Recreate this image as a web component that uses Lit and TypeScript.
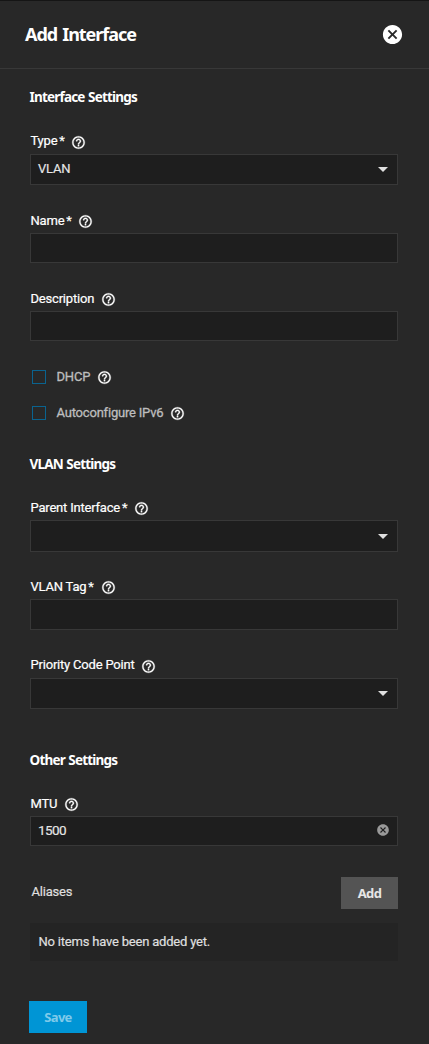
import { LitElement, html, css, svg, nothing } from "lit";
import { customElement, property } from "lit/decorators.js";

const HELP =
  "M11 18h2v-2h-2v2zm1-16C6.48 2 2 6.48 2 12s4.48 10 10 10 10-4.48 10-10S17.52 2 12 2zm0 18c-4.41 0-8-3.59-8-8s3.59-8 8-8 8 3.59 8 8-3.59 8-8 8zm0-14c-2.21 0-4 1.79-4 4h2c0-1.1.9-2 2-2s2 .9 2 2c0 2-3 1.75-3 5h2c0-2.25 3-2.5 3-5 0-2.21-1.79-4-4-4z";
const CLOSE_CIRCLE =
  "M12 2c5.53 0 10 4.47 10 10s-4.47 10-10 10S2 17.53 2 12 6.47 2 12 2m3.59 5L12 10.59 8.41 7 7 8.41 10.59 12 7 15.59 8.41 17 12 13.41 15.59 17 17 15.59 13.41 12 17 8.41 15.59 7z";

const icon = (d: string, cls: string) =>
  html`<svg class=${cls} viewBox="0 0 24 24" aria-hidden="true">${svg`<path d=${d} fill="currentColor"></path>`}</svg>`;

@customElement("form-field")
export class FormField extends LitElement {
  @property() label = "";
  @property() value = "";
  @property() kind: "text" | "select" | "clearable" = "text";
  @property({ type: Boolean }) required = false;

  static styles = css`
    :host { display: flex; flex-direction: column; }
    .label {
      height: 26px; display: flex; align-items: center; color: #fff;
      font-size: 13px; font-weight: 400; padding-left: 0.5px;
      -webkit-text-stroke: 0.2px currentColor;
    }
    :host(.raised) .label span { margin-top: -2px; }
    .star { margin-left: 1.9px; }
    .help { width: 15px; height: 15px; margin: 2px 0 0 6.8px; stroke: currentColor; stroke-width: 0.5px; }
    .box {
      flex: 1; box-sizing: border-box; display: flex; align-items: center; justify-content: space-between;
      background: #1e1e1e; border: 1px solid #383838; padding: 0 9px 0 7px;
      color: #e6e6e6; font-size: 13px;
    }
    .text { margin-top: -2px; -webkit-text-stroke: 0.15px currentColor; }
    .clearable { font-size: 13.5px; letter-spacing: -0.55px; }
    .caret { width: 10px; height: 5px; color: #e0e0e0; }
    .clear { width: 14px; height: 14px; margin: -2px -2px 0 0; color: #999; }
  `;

  render() {
    return html`
      <div class="label">
        <span>${this.label}</span>${this.required ? html`<span class="star">*</span>` : nothing}${icon(HELP, "help")}
      </div>
      <div class="box">
        <span class="text ${this.kind}">${this.value}</span>
        ${this.kind === "select"
          ? html`<svg class="caret" viewBox="0 0 10 5"><path d="M0 0h10L5 5z" fill="currentColor"></path></svg>`
          : this.kind === "clearable" ? icon(CLOSE_CIRCLE, "clear") : nothing}
      </div>
    `;
  }
}

@customElement("app-root")
export class AppRoot extends LitElement {
  static styles = css`
    :host {
      display: flex; flex-direction: column; box-sizing: border-box; height: 1044px;
      background: #282828; border-top: 1px solid #151515; color: #fff;
      font-family: Roboto, "Liberation Sans", sans-serif; font-size: 13px; letter-spacing: -0.2px;
    }
    header {
      height: 67px; flex: none; display: flex; align-items: center; justify-content: space-between;
      padding: 0 25px; border-bottom: 1px solid #383838;
    }
    h1 { margin: -2px 0 0; font: 700 18px/24px "Noto Sans", sans-serif; letter-spacing: -1.05px; word-spacing: 1.5px; }
    .close { width: 23px; height: 23px; margin: -1px 0 0; }
    main { display: flex; flex-direction: column; padding: 18px 31px 0 30px; }
    h2 { margin: 0 0 0 -0.5px; font: 700 13.5px/20px "Noto Sans", sans-serif; letter-spacing: -0.8px; word-spacing: 0.7px; color: #fff; height: 20px; }
    .group { display: flex; flex-direction: column; }
    .interface { margin-top: 21px; gap: 22px; }
    .vlan { margin-top: 20px; gap: 21px; }
    .other { margin-top: 20px; }
    .h56 { height: 56px; }
    .h57 { height: 57px; }
    .h58 { height: 58px; }
    .tag { margin-bottom: 1px; }
    .checks { margin: 18px 0 23px; }
    .check { height: 36px; display: flex; align-items: center; color: #bdbdbd; padding-left: 2px; -webkit-text-stroke: 0.3px currentColor; }
    .name { margin-top: -2px; }
    .square { box-sizing: border-box; width: 14px; height: 14px; border: 1px solid #0a638f; margin-right: 10.5px; }
    .help { width: 15px; height: 15px; margin-left: 6.5px; color: #fff; stroke: currentColor; stroke-width: 0.5px; }
    .last { margin-top: 41px; }
    .aliases { margin-top: 31px; height: 32px; display: flex; justify-content: space-between; padding-left: 1.5px; color: #e0e0e0; }
    .aliases span { line-height: 29px; -webkit-text-stroke: 0.15px currentColor; }
    button { border: 0; padding: 0; height: 32px; font: 700 13px/32px "Noto Sans", sans-serif; letter-spacing: -0.7px; }
    .add { width: 57px; background: #545454; color: #e6e6e6; }
    .empty { margin-top: 14px; height: 38px; line-height: 37px; padding-left: 8.5px; background: #242424; color: #e0e0e0; -webkit-text-stroke: 0.15px currentColor; }
    .save { margin: 40px 0 0 -1px; width: 58px; background: #0095d5; color: #7fcaea; }
  `;

  render() {
    return html`
      <header><h1>Add Interface</h1>${icon(CLOSE_CIRCLE, "close")}</header>
      <main>
        <h2>Interface Settings</h2>
        <div class="group interface">
          <form-field class="h57 raised" label="Type" required kind="select" value="VLAN"></form-field>
          <form-field class="h56" label="Name" required></form-field>
          <form-field class="h56" label="Description"></form-field>
        </div>
        <div class="group checks">
          ${["DHCP", "Autoconfigure IPv6"].map(
            (name) => html`<div class="check"><span class="square"></span><span class="name">${name}</span>${icon(HELP, "help")}</div>`
          )}
        </div>
        <h2>VLAN Settings</h2>
        <div class="group vlan">
          <form-field class="h58" label="Parent Interface" required kind="select"></form-field>
          <form-field class="h57 tag" label="VLAN Tag" required></form-field>
          <form-field class="h57 raised" label="Priority Code Point" kind="select"></form-field>
        </div>
        <h2 class="last">Other Settings</h2>
        <div class="group other">
          <form-field class="h56" label="MTU" kind="clearable" value="1500"></form-field>
        </div>
        <div class="aliases"><span>Aliases</span><button class="add">Add</button></div>
        <div class="empty">No items have been added yet.</div>
        <button class="save">Save</button>
      </main>
    `;
  }
}
